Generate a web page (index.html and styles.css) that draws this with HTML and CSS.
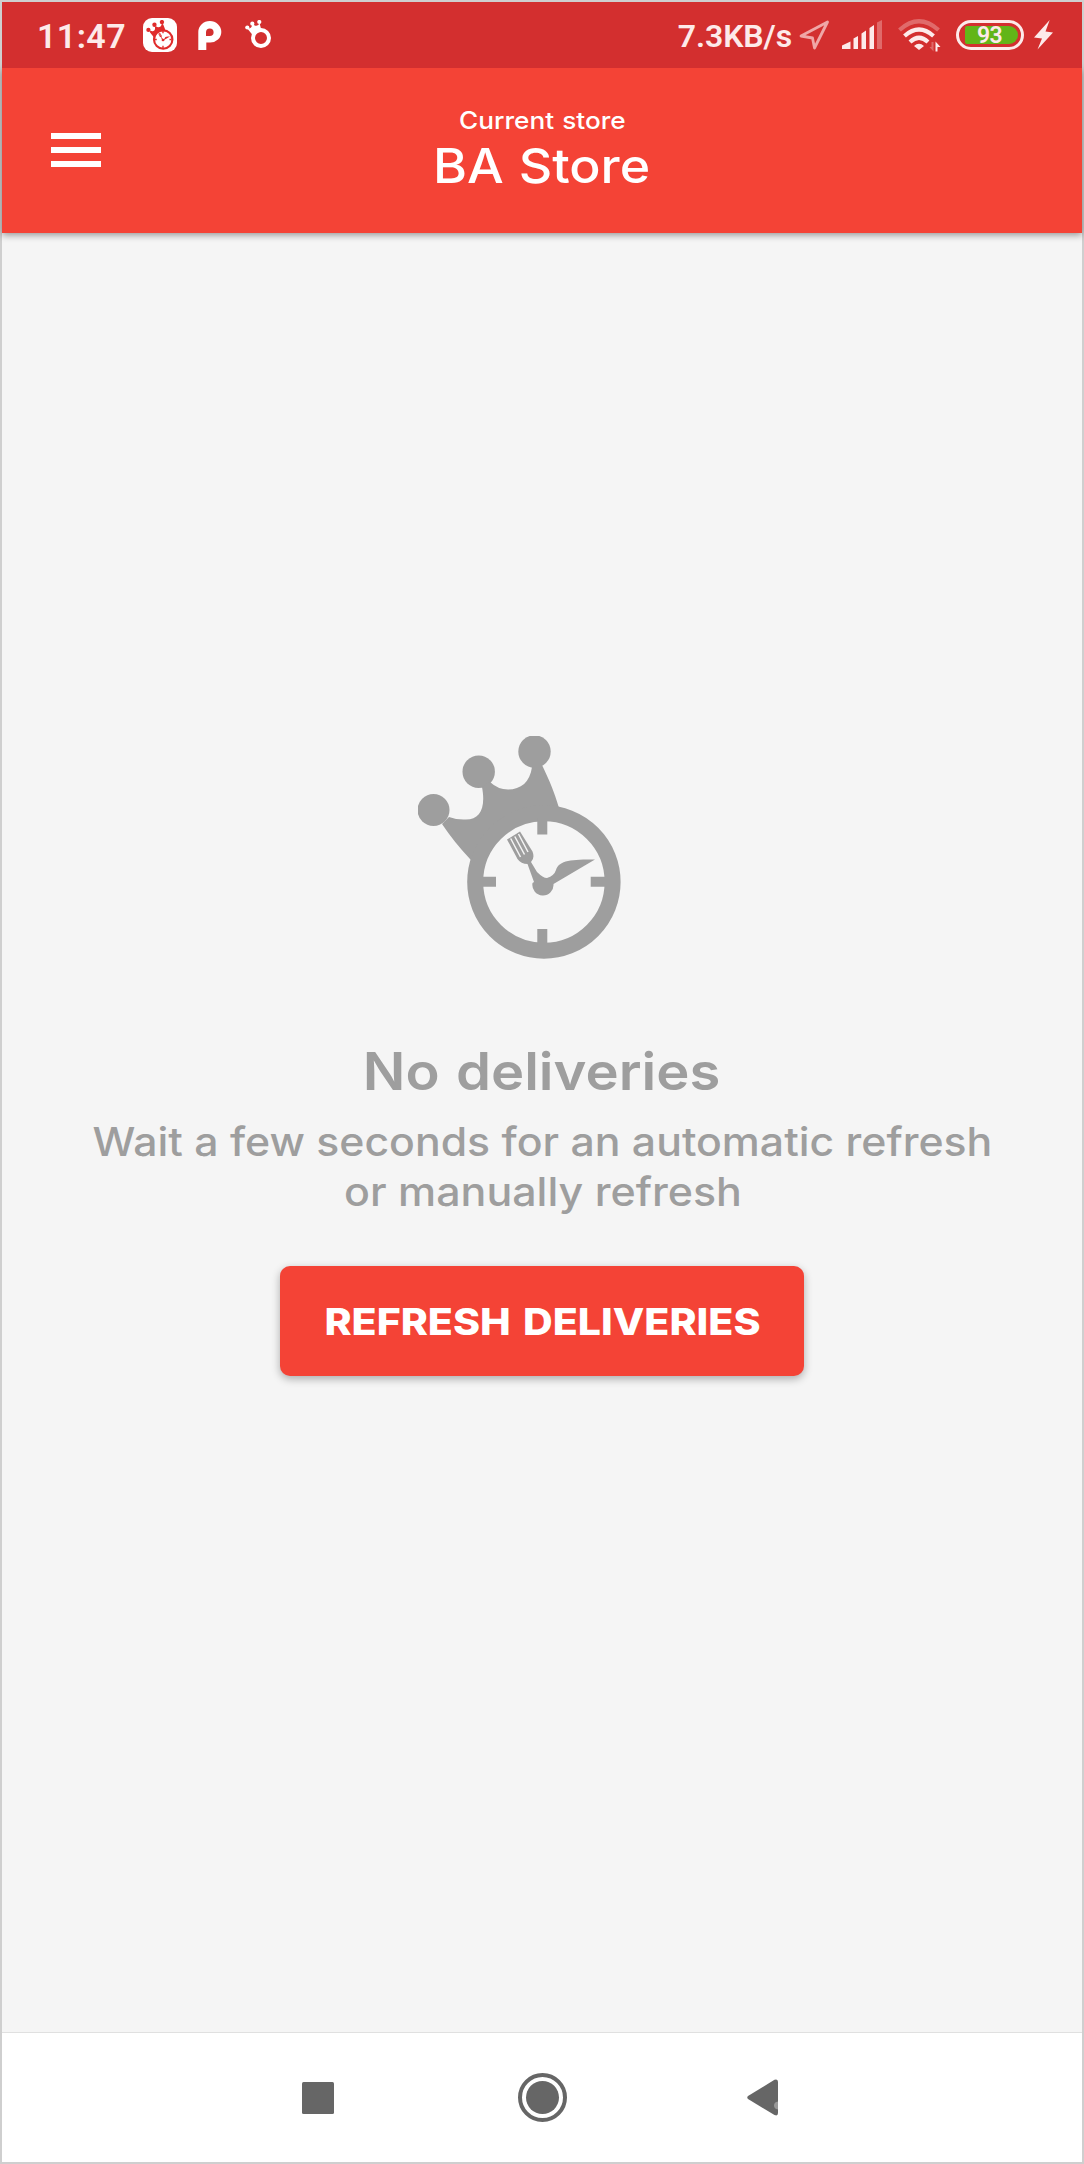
FILE: index.html
```html
<!DOCTYPE html>
<html lang="en">
<head>
<meta charset="utf-8">
<title>Deliveries</title>
<link rel="stylesheet" href="styles.css">
</head>
<body>
<svg class="defs" width="0" height="0" aria-hidden="true">
  <symbol id="crown-clock" viewBox="18 16 204 224">
    <circle cx="33.500" cy="90" r="16"/><circle cx="78.700" cy="51.700" r="16.200"/><circle cx="134.500" cy="31.500" r="16.200"/>
    <path d="M42 104Q54 122 70 139L76 145A70 70 0 0 1 155 94L159 88C154 71 150 62 142 45L132 47C130 62 121 69.500 108 69.500Q98 69.500 90 62L82 67C86 88 80 99.500 66 99.500Q57 100 49 97Z"/>
    <circle cx="143.900" cy="162" r="68.700" fill="none" stroke="currentColor" stroke-width="16"/>
    <path d="M137.300 98h10v16.500h-10zM137.300 209h10v16h-10zM80 156.700h16v10H80zM190.700 156.700h16v10h-16z"/>
    <path d="M107 119.500L120 111.500L132.500 131.500Q135 138 131 142L137 152Q143 158 147 158Q154 156 156 150C159 140 172 139.500 195 139.500L153.500 164A10.600 10.600 0 1 1 132.500 163L134 162L127.500 144Q121 144 117.500 139Z"/>
    <path class="clock-gap" d="M110.700 118.500L120.500 137M114.800 116.500L124.500 134.500M118.500 114L128 132" fill="none" stroke-width="1.500"/>
  </symbol>
</svg>
<div class="screen">
  <div class="status">
    <div class="status-left">
      <span class="time">11:47</span>
      <span class="app-badge"><svg width="28" height="30"><use href="#crown-clock"/></svg></span>
      <svg class="p-icon" width="24" height="30" viewBox="0 0 24 30"><path fill="#fff" fill-rule="evenodd" d="M.3 30V12A11.500 11 0 0 1 23.300 12A11 10.500 0 0 1 12 22.500H8.300V30ZM8 16H11.800A3.800 3.800 0 1 0 8 12.200Z"/></svg>
      <svg class="ring-icon" width="28" height="30" viewBox="0 0 28 30"><g fill="#fff"><circle cx="3.300" cy="7.500" r="2.100"/><circle cx="8.300" cy="3.700" r="2.100"/><circle cx="15.300" cy="2" r="2.100"/><path d="M3.300 8.500Q8.500 9 8 4Q14 8 15.500 3L17.500 10.500L9 15.500Z"/></g><circle cx="17" cy="18" r="8" fill="none" stroke="#fff" stroke-width="4"/></svg>
    </div>
    <div class="status-right">
      <span class="speed">7.3KB/s</span>
      <svg class="loc" width="32" height="32" viewBox="0 0 32 32"><path d="M2 17L28.500 3L15.500 29L13.500 19Z" fill="none" stroke="#efa7a7" stroke-width="2.800" stroke-linejoin="round"/></svg>
      <svg class="signal" width="41" height="30" viewBox="0 0 41 30"><g fill="#fdeaea"><path d="M0 29v-3.500L8.500 21.500V29zM11.500 29V18.500L16 16V29zM19.500 29V13.500L24 10.500V29zM27.500 29V8L32 5V29z"/><path opacity=".32" d="M35 29V2.500L40 0V29z"/></g></svg>
      <svg class="wifi" width="44" height="34" viewBox="0 0 44 34"><g fill="none" stroke="#fdeaea" stroke-width="4.200"><path opacity=".32" d="M1.500 11Q21-6.500 40.500 11"/><path d="M6.500 17Q21 4 35.500 17M12 23Q21 14.500 30 23"/></g><path fill="#fdeaea" d="M21 31L16 27Q21 22.500 26 27ZM37.500 32.500V22.500L42.500 28H39.500V32.500Z"/><path d="M35.500 23v9.500L31.500 28H33.500V23Z" fill="#fdeaea" opacity=".3"/></svg>
      <span class="battery"><span class="charge">93</span></span>
      <svg class="bolt" width="20" height="30" viewBox="0 0 20 30"><path fill="#fdeaea" d="M15.700 0L0 17.500L8 18.500L3.500 29.500L19 12.500L11.500 11.500Z"/></svg>
    </div>
  </div>
  <header class="bar">
    <svg class="menu" width="50" height="34" viewBox="0 0 50 34"><path fill="#fff" d="M0 0h50v6H0zM0 14h50v6H0zM0 28h50v6H0z"/></svg>
    <div class="store"><span class="caption">Current store</span><h1 class="name">BA Store</h1></div>
  </header>
  <main class="content">
    <svg class="logo" width="204" height="224"><use href="#crown-clock"/></svg>
    <h2 class="title">No deliveries</h2>
    <p class="hint"><span class="hint-a">Wait a few seconds for an automatic refresh</span><span class="hint-b">or manually refresh</span></p>
    <button class="refresh"><span class="refresh-text">REFRESH DELIVERIES</span></button>
  </main>
  <nav class="nav">
    <svg width="32" height="32" viewBox="0 0 32 32"><rect width="32" height="32" rx="1.500" fill="#666"/></svg>
    <svg width="49" height="49" viewBox="0 0 49 49"><circle cx="24.500" cy="24.500" r="22.500" fill="none" stroke="#666" stroke-width="4"/><circle cx="24.500" cy="24.500" r="16.500" fill="#666"/></svg>
    <svg width="31" height="37" viewBox="0 0 31 37"><path fill="#666" d="M1 17L27.500 .8Q31-.5 31 3V34Q31 37.500 27.500 36L1 20Q-.5 18.500 1 17Z"/><path fill="#999" d="M31 22.500Q27 23 27 26.500T31 30.500Z"/></svg>
  </nav>
</div>
</body>
</html>
```
FILE: styles.css
```css
* { box-sizing: border-box; }
body { margin: 0; font-family: Inter, "Liberation Sans", sans-serif; }
svg { display: block; flex: none; }
.defs { position: absolute; }
.screen { width: 1084px; height: 2164px; border: 2px solid #cfcfcf; display: flex; flex-direction: column; background: #f5f5f5; }
.status { height: 66px; background: #d32f2f; display: flex; justify-content: space-between; color: #fdeaea; font-family: Roboto, sans-serif; font-weight: 600; position: relative; z-index: 1; }
.status-left, .status-right { display: flex; align-items: center; }
.status-left { padding-left: 35px; }
.time { font-size: 34px; line-height: 66px; width: 106px; padding-top: 2px; letter-spacing: 0.4px; }
.app-badge { width: 34px; height: 34px; border-radius: 9px; background: #fff; color: #e02b2b; display: flex; align-items: center; justify-content: center; }
.app-badge use { fill: currentColor; }
.clock-gap { stroke: #f4f4f4; }
.p-icon { margin-left: 21px; }
.ring-icon { margin-left: 22px; }
.status-right { padding-right: 28px; }
.speed { font-size: 32px; line-height: 66px; padding-top: 2px; letter-spacing: -0.1px; }
.loc { margin-left: 7px; }
.signal { margin-left: 11px; }
.wifi { margin-left: 15px; margin-top: 2px; }
.battery { width: 68px; height: 30px; margin-left: 14px; border: 3px solid #fdeaea; border-radius: 15px; padding: 3px 3px 3px 6px; }
.charge { display: block; height: 18px; border-radius: 2px 9px 9px 2px; background: #62b518; text-align: center; font-size: 23px; line-height: 19px; letter-spacing: -0.7px; padding-right: 4px; }
.bolt { margin-left: 10px; }
.bar { height: 165px; background: #f44336; color: #fff; display: grid; grid-template-columns: 100px 1fr 100px; box-shadow: 0 2px 7px rgba(0,0,0,.4); }
.menu { margin: 65px 0 0 49px; }
.store { display: flex; flex-direction: column; align-items: center; padding-top: 38px; }
.caption { font-size: 24px; line-height: 30px; font-weight: 500; white-space: nowrap; word-spacing: 1px; transform: scaleX(1.09); }
.name { margin: 0; font-size: 48px; line-height: 60px; font-weight: 500; white-space: nowrap; word-spacing: 1px; transform: scaleX(1.08); }
.content { flex: 1; display: flex; flex-direction: column; align-items: center; color: #9e9e9e; }
.logo { margin: 503px 44px 0 0; fill: #9e9e9e; color: #9e9e9e; }
.title { margin: 80px 0 0; font-size: 52px; line-height: 64px; font-weight: 600; word-spacing: 2px; transform: scaleX(1.08); }
.hint { margin: 13px 0 0; font-size: 39.500px; line-height: 50px; font-weight: 500; display: flex; flex-direction: column; align-items: center; white-space: nowrap; }
.hint-a { transform: scaleX(1.083); }
.hint-b { transform: translateX(1px) scaleX(1.087); }
.refresh { margin: 49px 0 0; width: 524px; height: 110px; border: 0; border-radius: 10px; background: #f44336; color: #fff; font: 800 37px Inter, sans-serif; padding: 0; box-shadow: 0 3px 8px rgba(0,0,0,.3); white-space: nowrap; }
.refresh-text { display: inline-block; word-spacing: 3px; transform: scaleX(1.11); }
.nav { height: 130px; background: #fff; border-top: 1px solid #e0e0e0; display: flex; align-items: center; justify-content: space-between; padding: 0 304px 0 300px; }
.nav svg:nth-child(2) { margin-left: 4px; }
```
